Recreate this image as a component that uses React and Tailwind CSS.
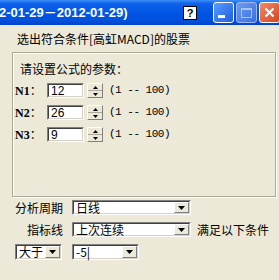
import React from "react";

const Sunken = ({ className = "", children }) => (
  <div
    className={`border border-t-[#808080] border-l-[#808080] border-b-white border-r-white ${className}`}
  >
    <div className="h-full w-full border border-t-[#404040] border-l-[#404040] border-b-[#d4d0c8] border-r-[#d4d0c8] bg-white flex items-center">
      {children}
    </div>
  </div>
);

const Arrow = ({ up }) => (
  <svg width="5" height="3" viewBox="0 0 5 3">
    <path d={up ? "M2.5 0L5 3H0z" : "M0 0h5L2.5 3z"} fill="#000" />
  </svg>
);

const Spin = () => (
  <div className="w-[16px] h-[15px] flex flex-col border border-t-white border-l-white border-b-[#808080] border-r-[#808080] bg-[#ece9d8]">
    <div className="flex-1 flex items-center justify-center border-b border-[#aca899]">
      <Arrow up />
    </div>
    <div className="flex-1 flex items-center justify-center">
      <Arrow />
    </div>
  </div>
);

const DropBtn = () => (
  <div className="w-[15px] h-full flex items-center justify-center border border-t-white border-l-white border-b-[#808080] border-r-[#808080] bg-[#ece9d8]">
    <svg width="7" height="4" viewBox="0 0 7 4">
      <path d="M0 0h7L3.5 4z" fill="#000" />
    </svg>
  </div>
);

const Combo = ({ value, className = "" }) => (
  <Sunken className={className}>
    <span className="flex-1 pl-[2px] text-[12px] leading-[12px] whitespace-nowrap text-black">{value}</span>
    <DropBtn />
  </Sunken>
);

const ParamRow = ({ label, value }) => (
  <div className="flex items-center h-[15px]">
    <span className="w-[32px] font-['Liberation_Serif'] font-bold text-[12px] leading-none">
      {label}
      <span className="font-['Noto_Sans_CJK_SC'] font-normal">：</span>
    </span>
    <Sunken className="w-[37px] h-[15px]">
      <span className="pl-[2px] font-['Liberation_Sans'] text-[12px] leading-none">{value}</span>
    </Sunken>
    <div className="ml-[3px]">
      <Spin />
    </div>
    <span className="ml-[6px] font-['Liberation_Mono'] text-[11px] tracking-[-0.5px] leading-none">
      (1 -- 100)
    </span>
  </div>
);

export default function App() {
  return (
    <div className="w-[279px] h-[280px] overflow-hidden bg-[#ece9d8] font-['Noto_Sans_CJK_SC','Liberation_Sans',sans-serif] text-black">
      {/* title bar */}
      <div className="h-[25px] flex items-center bg-[linear-gradient(to_bottom,#3d8ef8_0%,#0d61ea_15%,#0054e3_55%,#0050dc_85%,#0343c6_100%)]">
        <div className="flex-1 overflow-hidden whitespace-nowrap -ml-[1px] font-['Liberation_Sans'] font-bold text-[13px] text-white">
          2-01-29<span className="font-['Noto_Sans_CJK_SC']">－</span>2012-01-29)
        </div>
        <div className="w-[14px] h-[14px] mr-[16px] mt-[1px] bg-white border border-black flex items-center justify-center text-[11px] font-bold font-['Liberation_Sans'] leading-none">
          ?
        </div>
        <div className="flex gap-[2px] mr-[-1px]">
          <div className="w-[21px] h-[21px] rounded-[3px] border border-white bg-[linear-gradient(135deg,#5a9bff,#1e5fe0)] flex items-end pl-[4px] pb-[4px]">
            <div className="w-[7px] h-[3px] bg-white" />
          </div>
          <div className="w-[21px] h-[21px] rounded-[3px] border border-[#9db8f0] bg-[linear-gradient(135deg,#6e9cf0,#3b6ee0)] flex items-center justify-center">
            <div className="w-[11px] h-[10px] border border-[#a9c2f2] border-t-2" />
          </div>
          <div className="w-[21px] h-[21px] rounded-[3px] border border-white bg-[linear-gradient(135deg,#f08a68,#d8441c)] flex items-center justify-center">
            <svg width="11" height="11" viewBox="0 0 11 11">
              <path d="M1.5 1.5l8 8M9.5 1.5l-8 8" stroke="#fff" strokeWidth="2" />
            </svg>
          </div>
        </div>
      </div>

      {/* body */}
      <div className="pt-[7px] pl-[17px] text-[12px] leading-[14px]">选出符合条件[高虹MACD]的股票</div>

      <div className="ml-[12px] mt-[6px] w-[264px] h-[145px] border border-[#aca899] shadow-[inset_1px_1px_0_#fff,1px_1px_0_#fff] pl-[2px] pt-[9px]">
        <div className="pl-[5px] text-[12px] leading-[14px]">请设置公式的参数：</div>
        <div className="mt-[7px] flex flex-col gap-[7px]">
          <ParamRow label="N1" value="12" />
          <ParamRow label="N2" value="26" />
          <ParamRow label="N3" value="9" />
        </div>
      </div>

      <div className="mt-[3px] flex flex-col text-[12px]">
        <div className="flex items-center h-[15px]">
          <span className="w-[63px] text-right leading-none">分析周期</span>
          <Combo value="日线" className="ml-[9px] w-[119px] h-[15px]" />
        </div>
        <div className="flex items-center h-[15px] mt-[7px]">
          <span className="w-[63px] text-right leading-none">指标线</span>
          <Combo value="上次连续" className="ml-[9px] w-[119px] h-[15px]" />
          <span className="ml-[6px] leading-none">满足以下条件</span>
        </div>
        <div className="flex items-center h-[16px] mt-[7px] pl-[15px]">
          <Combo value="大于" className="w-[47px] h-[16px]" />
          <Combo value="-5|" className="ml-[10px] w-[67px] h-[16px]" />
        </div>
      </div>
    </div>
  );
}
